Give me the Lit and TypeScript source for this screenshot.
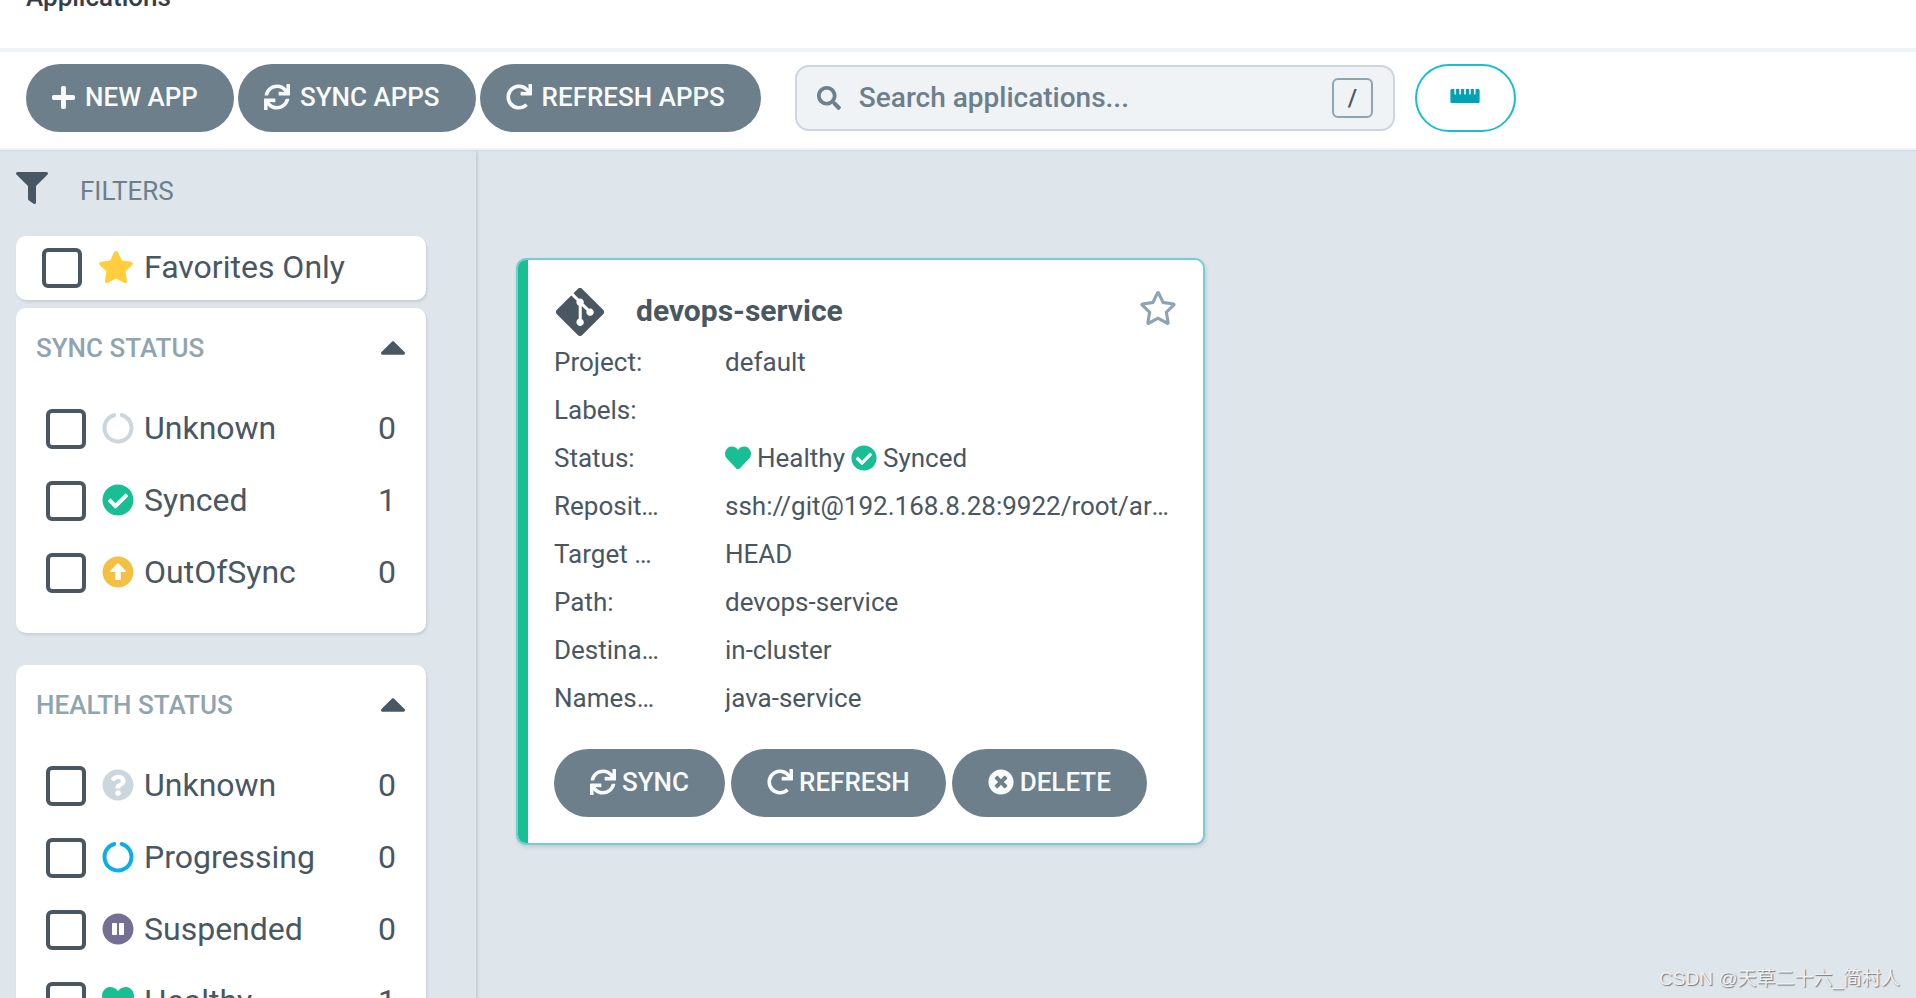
import { LitElement, html, css, svg, nothing } from "lit";
import { customElement, property, state } from "lit/decorators.js";

type Icon = { box: string; d: string };

const ICONS: Record<string, Icon> = {
  plus: {
    box: "0 32 448 448",
    d: "M416 208H272V64c0-17.67-14.33-32-32-32h-32c-17.67 0-32 14.33-32 32v144H32c-17.67 0-32 14.33-32 32v32c0 17.67 14.33 32 32 32h144v144c0 17.67 14.33 32 32 32h32c17.67 0 32-14.33 32-32V304h144c17.67 0 32-14.33 32-32v-32c0-17.67-14.33-32-32-32z",
  },
  sync: {
    box: "0 0 512 512",
    d: "M440.65 12.57l4 82.77A247.16 247.16 0 0 0 255.83 8C134.73 8 33.91 94.92 12.29 209.82A12 12 0 0 0 24.09 224h49.05a12 12 0 0 0 11.67-9.26 175.91 175.91 0 0 1 317-56.94l-101.46-4.86a12 12 0 0 0-12.57 12v47.41a12 12 0 0 0 12 12H500a12 12 0 0 0 12-12V12a12 12 0 0 0-12-12h-47.37a12 12 0 0 0-11.98 12.57zM255.83 432a175.61 175.61 0 0 1-146-77.8l101.8 4.87a12 12 0 0 0 12.57-12v-47.4a12 12 0 0 0-12-12H12a12 12 0 0 0-12 12V500a12 12 0 0 0 12 12h47.35a12 12 0 0 0 12-12.6l-4.15-82.57A247.17 247.17 0 0 0 255.83 504c121.11 0 221.93-86.92 243.55-201.82a12 12 0 0 0-11.8-14.18h-49.05a12 12 0 0 0-11.67 9.26A175.86 175.86 0 0 1 255.83 432z",
  },
  redo: {
    box: "0 0 512 512",
    d: "M500.33 0h-47.41a12 12 0 0 0-12 12.57l4 82.76A247.42 247.42 0 0 0 256 8C119.34 8 7.9 119.53 8 256.19 8.1 393.07 119.1 504 256 504a247.1 247.1 0 0 0 166.18-63.91 12 12 0 0 0 .48-17.43l-34-34a12 12 0 0 0-16.38-.55A176 176 0 1 1 402.1 157.8l-101.53-4.87a12 12 0 0 0-12.57 12v47.41a12 12 0 0 0 12 12h200.33a12 12 0 0 0 12-12V12a12 12 0 0 0-12-12z",
  },
  search: {
    box: "0 0 512 512",
    d: "M505 442.7L405.3 343c-4.5-4.5-10.6-7-17-7H372c27.6-35.3 44-79.7 44-128C416 93.1 322.9 0 208 0S0 93.1 0 208s93.1 208 208 208c48.3 0 92.7-16.4 128-44v16.3c0 6.4 2.5 12.5 7 17l99.7 99.7c9.4 9.4 24.6 9.4 33.9 0l28.3-28.3c9.4-9.4 9.4-24.6.1-34zM208 336c-70.7 0-128-57.2-128-128 0-70.7 57.2-128 128-128 70.7 0 128 57.2 128 128 0 70.7-57.2 128-128 128z",
  },
  ruler: {
    box: "0 118 576 276",
    d: "M544 118h-48v98a8 8 0 0 1-8 8h-16a8 8 0 0 1-8-8v-98h-64v98a8 8 0 0 1-8 8h-16a8 8 0 0 1-8-8v-98h-64v98a8 8 0 0 1-8 8h-16a8 8 0 0 1-8-8v-98h-64v98a8 8 0 0 1-8 8h-16a8 8 0 0 1-8-8v-98h-64v98a8 8 0 0 1-8 8H88a8 8 0 0 1-8-8v-98H32c-18 0-32 14-32 32v212c0 18 14 32 32 32h512c18 0 32-14 32-32V150c0-18-14-32-32-32z",
  },
  filter: {
    box: "0 0 512 512",
    d: "M487.976 0H24.028C2.71 0-8.047 25.866 7.058 40.971L192 225.941V432c0 7.831 3.821 15.17 10.237 19.662l80 55.98C298.02 518.69 320 507.493 320 487.98V225.941l184.947-184.97C520.021 25.896 509.338 0 487.976 0z",
  },
  star: {
    box: "0 0 576 512",
    d: "M259.3 17.8L194 150.2 47.9 171.5c-26.2 3.8-36.7 36.1-17.7 54.6l105.7 103-25 145.5c-4.5 26.3 23.2 46 46.4 33.7L288 439.6l130.7 68.7c23.2 12.2 50.9-7.4 46.4-33.7l-25-145.5 105.7-103c19-18.5 8.5-50.8-17.7-54.6L382 150.2 316.7 17.8c-11.7-23.6-45.6-23.9-57.4 0z",
  },
  starOutline: {
    box: "0 0 576 512",
    d: "M528.1 171.5L382 150.2 316.7 17.8c-11.7-23.6-45.6-23.9-57.4 0L194 150.2 47.9 171.5c-26.2 3.8-36.7 36.1-17.7 54.6l105.7 103-25 145.5c-4.5 26.3 23.2 46 46.4 33.7L288 439.6l130.7 68.7c23.2 12.2 50.9-7.4 46.4-33.7l-25-145.5 105.7-103c19-18.5 8.5-50.8-17.7-54.6zM388.6 312.3l23.7 138.4L288 385.4l-124.3 65.3 23.7-138.4-100.6-98 139-20.2 62.2-126 62.2 126 139 20.2-100.6 98z",
  },
  caret: {
    box: "11 183 298 169",
    d: "M288.662 352H31.338c-17.818 0-26.741-21.543-14.142-34.142l128.662-128.662c7.81-7.81 20.474-7.81 28.284 0l128.662 128.662c12.6 12.599 3.676 34.142-14.142 34.142z",
  },
  notch: {
    box: "0 0 512 512",
    d: "M288 39.056v16.659c0 10.804 7.281 20.159 17.686 23.066C383.204 100.434 440 171.518 440 256c0 101.689-82.295 184-184 184-101.689 0-184-82.295-184-184 0-84.47 56.786-155.564 134.312-177.219C216.719 75.874 224 66.517 224 55.712V39.064c0-15.709-14.834-27.153-30.046-23.234C86.603 43.482 7.394 141.206 8.003 257.332c.72 137.052 111.477 246.956 248.531 246.667C393.255 503.711 504 392.788 504 256c0-115.633-79.14-212.779-186.211-240.236C302.678 11.889 288 23.456 288 39.056z",
  },
  check: {
    box: "0 0 512 512",
    d: "M504 256c0 136.967-111.033 248-248 248S8 392.967 8 256 119.033 8 256 8s248 111.033 248 248zM227.314 387.314l184-184c6.248-6.248 6.248-16.379 0-22.627l-22.627-22.627c-6.248-6.249-16.379-6.249-22.628 0L216 308.118l-70.059-70.059c-6.248-6.248-16.379-6.248-22.628 0l-22.627 22.627c-6.248 6.248-6.248 16.379 0 22.627l104 104c6.249 6.249 16.379 6.249 22.628.001z",
  },
  arrowUp: {
    box: "0 0 512 512",
    d: "M8 256C8 119 119 8 256 8s248 111 248 248-111 248-248 248S8 393 8 256zm292 116V256h70.9c10.7 0 16.1-13 8.5-20.5L264.5 121.2c-4.7-4.7-12.2-4.7-16.9 0l-115 114.3c-7.6 7.6-2.2 20.5 8.5 20.5H212v116c0 6.6 5.4 12 12 12h64c6.6 0 12-5.4 12-12z",
  },
  question: {
    box: "0 0 512 512",
    d: "M504 256c0 136.997-111.043 248-248 248S8 392.997 8 256C8 119.083 119.043 8 256 8s248 111.083 248 248zM262.655 90c-54.497 0-89.255 22.957-116.549 63.758-3.536 5.286-2.353 12.415 2.715 16.258l34.699 26.31c5.205 3.947 12.621 3.008 16.665-2.122 17.864-22.658 30.113-35.797 57.303-35.797 20.429 0 45.698 13.148 45.698 32.958 0 14.976-12.363 22.667-32.534 33.976C247.128 238.528 216 254.941 216 296v4c0 6.627 5.373 12 12 12h56c6.627 0 12-5.373 12-12v-1.333c0-28.462 83.186-29.647 83.186-106.667 0-58.002-60.165-102-116.531-102zM256 338c-25.365 0-46 20.635-46 46 0 25.364 20.635 46 46 46s46-20.636 46-46c0-25.365-20.635-46-46-46z",
  },
  pause: {
    box: "0 0 512 512",
    d: "M256 8C119 8 8 119 8 256s111 248 248 248 248-111 248-248S393 8 256 8zm-16 328c0 8.8-7.2 16-16 16h-48c-8.8 0-16-7.2-16-16V176c0-8.8 7.2-16 16-16h48c8.8 0 16 7.2 16 16v160zm112 0c0 8.8-7.2 16-16 16h-48c-8.8 0-16-7.2-16-16V176c0-8.8 7.2-16 16-16h48c8.8 0 16 7.2 16 16v160z",
  },
  heart: {
    box: "0 0 512 512",
    d: "M462.3 62.6C407.5 15.9 326 24.3 275.7 76.2L256 96.5l-19.7-20.3C186.1 24.3 104.5 15.9 49.7 62.6c-62.8 53.6-66.1 149.8-9.9 207.9l193.5 199.8c12.5 12.9 32.8 12.9 45.3 0l193.5-199.8c56.3-58.1 53-154.3-9.8-207.9z",
  },
  times: {
    box: "0 0 512 512",
    d: "M256 8C119 8 8 119 8 256s111 248 248 248 248-111 248-248S393 8 256 8zm121.6 313.1c4.7 4.7 4.7 12.3 0 17L338 377.6c-4.7 4.7-12.3 4.7-17 0L256 312l-65.1 65.6c-4.7 4.7-12.3 4.7-17 0L134.4 338c-4.7-4.7-4.7-12.3 0-17l65.6-65-65.6-65.1c-4.7-4.7-4.7-12.3 0-17l39.6-39.6c4.7-4.7 12.3-4.7 17 0l65 65.7 65.1-65.6c4.7-4.7 12.3-4.7 17 0l39.6 39.6c4.7 4.7 4.7 12.3 0 17L312 256l65.6 65.1z",
  },
  git: {
    box: "0 32 448 448",
    d: "M439.55 236.05L244 40.45a28.87 28.87 0 0 0-40.81 0l-40.66 40.63 51.52 51.52c27.06-9.14 52.68 16.77 43.39 43.68l49.66 49.66c34.23-11.8 61.18 31 35.47 56.69-26.49 26.49-70.21-2.87-56-37.34L240.22 199v121.85c25.3 12.54 22.26 41.85 9.08 55a34.34 34.34 0 0 1-48.55 0c-17.57-17.6-11.07-46.91 11.25-56v-123c-20.8-8.51-24.6-30.74-18.64-45L142.57 101 8.45 235.14a28.86 28.86 0 0 0 0 40.81l195.61 195.6a28.86 28.86 0 0 0 40.8 0l194.69-194.69a28.86 28.86 0 0 0 0-40.81z",
  },
};

const icon = (name: string, cls = "") => html`<svg
  class="icon ${cls}"
  viewBox=${ICONS[name].box}
  aria-hidden="true"
>${svg`<path d=${ICONS[name].d}></path>`}</svg>`;

const shared = css`
  *,
  *::before,
  *::after {
    box-sizing: border-box;
  }
  .icon {
    display: block;
    flex: none;
    width: 26px;
    height: 26px;
    fill: currentColor;
  }
  button {
    font: inherit;
    cursor: pointer;
  }
  .pill {
    display: flex;
    align-items: center;
    height: 68px;
    border: 0;
    border-radius: 34px;
    background: #6d7f8b;
    color: #f8fbfb;
    font-size: 26px;
    font-weight: 500;
    line-height: 30px;
    white-space: nowrap;
  }
  .box {
    appearance: none;
    flex: none;
    width: 40px;
    height: 40px;
    margin: 2px 0 0;
    border: 4px solid #495763;
    border-radius: 6px;
    background: #fff;
  }
  .box:checked {
    background: #495763;
  }
  .grey {
    color: #ccd6dd;
  }
  .green {
    color: #18be94;
  }
  .amber {
    color: #f4c042;
  }
  .blue {
    color: #0dadea;
  }
  .purple {
    color: #766f94;
  }
  .gold {
    color: #ffce3c;
  }
`;

type Option = { label: string; icon: string; tone: string; count: number };

@customElement("filter-group")
class FilterGroup extends LitElement {
  @property() heading = "";
  @property({ attribute: false }) options: Option[] = [];
  @state() private open = true;

  static styles = [
    shared,
    css`
      :host {
        display: block;
        padding: 16px 20px 25px;
        border-radius: 10px;
        background: #fff;
        box-shadow: 1px 2px 3px rgba(0, 0, 0, 0.1);
      }
      .head {
        display: flex;
        align-items: center;
        justify-content: space-between;
        height: 48px;
        margin-bottom: 20px;
      }
      h2 {
        margin: 0;
        color: #8fa4b1;
        font-size: 26px;
        font-weight: 500;
        line-height: 48px;
      }
      .toggle {
        display: flex;
        padding: 0 1px 0 0;
        border: 0;
        background: none;
        color: #495763;
      }
      .toggle .icon {
        width: 24px;
        height: 14px;
      }
      .row {
        display: flex;
        align-items: center;
        height: 72px;
        padding: 0 10px;
        color: #495763;
        font-size: 32px;
        line-height: 40px;
      }
      .row .icon {
        width: 32px;
        height: 32px;
        margin: 0 10px 0 16px;
      }
      .name {
        flex: 1;
      }
    `,
  ];

  render() {
    return html`
      <div class="head">
        <h2>${this.heading}</h2>
        <button
          class="toggle"
          aria-label="Toggle ${this.heading}"
          aria-expanded=${this.open}
          @click=${() => (this.open = !this.open)}
        >
          ${icon("caret")}
        </button>
      </div>
      ${this.open
        ? this.options.map(
            (o) => html`<label class="row">
              <input class="box" type="checkbox" />
              ${icon(o.icon, o.tone)}
              <span class="name">${o.label}</span>
              <span>${o.count}</span>
            </label>`
          )
        : nothing}
    `;
  }
}

@customElement("app-card")
class AppCard extends LitElement {
  static styles = [
    shared,
    css`
      :host {
        display: block;
        overflow: hidden;
        border: 2px solid #76cbd4;
        border-radius: 10px;
        background: #fff;
        box-shadow: 1px 2px 4px rgba(0, 0, 0, 0.12);
        color: #495763;
      }
      .body {
        padding: 26px 26px;
        border-left: 10px solid #18be94;
      }
      .head {
        display: flex;
        align-items: center;
        height: 52px;
        padding-left: 2px;
      }
      .head .icon {
        width: 48px;
        height: 48px;
      }
      h3 {
        flex: 1;
        margin: 0 0 0 32px;
        padding-bottom: 2px;
        font-size: 30px;
        font-weight: 700;
        line-height: 36px;
      }
      .fav {
        align-self: flex-start;
        display: flex;
        padding: 4px 0 0;
        border: 0;
        background: none;
        color: #8fa4b1;
      }
      .fav .icon {
        width: 38px;
        height: 36px;
      }
      dl {
        margin: 0;
      }
      .row {
        display: grid;
        grid-template-columns: 106px 1fr;
        column-gap: 65px;
        height: 48px;
        font-size: 26px;
        line-height: 48px;
      }
      dt,
      dd {
        margin: 0;
        min-width: 0;
        overflow: hidden;
        text-overflow: ellipsis;
        white-space: nowrap;
      }
      .status {
        display: flex;
        align-items: center;
        gap: 6px;
      }
      .actions {
        display: flex;
        gap: 6px;
        margin-top: 27px;
      }
      .actions .pill {
        gap: 6px;
        padding: 0 36px 2px;
      }
    `,
  ];

  private row(label: string, value: unknown, cls = "") {
    return html`<div class="row">
      <dt>${label}</dt>
      <dd class=${cls}>${value}</dd>
    </div>`;
  }

  render() {
    return html`<div class="body">
      <div class="head">
        ${icon("git")}
        <h3>devops-service</h3>
        <button class="fav" aria-label="Add to favorites">${icon("starOutline")}</button>
      </div>
      <dl>
        ${this.row("Project:", "default")} ${this.row("Labels:", "")}
        ${this.row(
          "Status:",
          html`${icon("heart", "green")}<span>Healthy</span>${icon("check", "green")}<span>Synced</span>`,
          "status"
        )}
        ${this.row("Repository:", "ssh://git@192.168.8.28:9922/root/argocd.git")}
        ${this.row("Target Revision:", "HEAD")}
        ${this.row("Path:", "devops-service")}
        ${this.row("Destination:", "in-cluster")}
        ${this.row("Namespace:", "java-service")}
      </dl>
      <div class="actions">
        <button class="pill">${icon("sync")}SYNC</button>
        <button class="pill">${icon("redo")}REFRESH</button>
        <button class="pill">${icon("times")}DELETE</button>
      </div>
    </div>`;
  }
}

@customElement("app-root")
class AppRoot extends LitElement {
  private syncOptions: Option[] = [
    { label: "Unknown", icon: "notch", tone: "grey", count: 0 },
    { label: "Synced", icon: "check", tone: "green", count: 1 },
    { label: "OutOfSync", icon: "arrowUp", tone: "amber", count: 0 },
  ];

  private healthOptions: Option[] = [
    { label: "Unknown", icon: "question", tone: "grey", count: 0 },
    { label: "Progressing", icon: "notch", tone: "blue", count: 0 },
    { label: "Suspended", icon: "pause", tone: "purple", count: 0 },
    { label: "Healthy", icon: "heart", tone: "green", count: 1 },
  ];

  static styles = [
    shared,
    css`
      :host {
        position: relative;
        display: flex;
        flex-direction: column;
        height: 100vh;
        overflow: hidden;
        background: #dee5eb;
        color: #495763;
        font-family: Roboto, "Liberation Sans", sans-serif;
      }
      .top {
        display: flex;
        flex: none;
        align-items: flex-end;
        height: 52px;
        overflow: hidden;
        padding: 0 26px 36px;
        border-bottom: 4px solid #eff3f5;
        background: #fff;
      }
      h1 {
        margin: 0;
        color: #363c4a;
        font-size: 26px;
        font-weight: 500;
        line-height: 30px;
      }
      .tools {
        display: flex;
        flex: none;
        align-items: center;
        gap: 4px;
        padding: 12px 26px 16px;
        border-bottom: 2px solid #eff3f5;
        background: #fff;
        box-shadow: 0 1px 2px rgba(0, 0, 0, 0.06);
      }
      .tools .pill {
        gap: 10px;
        padding: 0 36px 2px 26px;
      }
      .tools .plus {
        width: 23px;
        height: 23px;
      }
      .search {
        display: flex;
        flex: 0 1 600px;
        align-items: center;
        min-width: 0;
        height: 66px;
        margin: 0 16px 0 30px;
        padding: 0 20px;
        border: 2px solid #ccd6dd;
        border-radius: 14px;
        background: #eff3f5;
        color: #6d7f8b;
      }
      .search .icon {
        width: 24px;
        height: 24px;
      }
      .search input {
        flex: 1;
        min-width: 0;
        margin: 0 18px;
        padding: 0;
        border: 0;
        outline: 0;
        background: none;
        color: inherit;
        font: 500 28px/36px Roboto, "Liberation Sans", sans-serif;
      }
      .search input::placeholder {
        color: #6d7f8b;
        opacity: 1;
      }
      kbd {
        width: 41px;
        height: 40px;
        border: 2px solid #8fa4b1;
        border-radius: 6px;
        color: #495763;
        font: 500 24px/36px Roboto, "Liberation Sans", sans-serif;
        text-align: center;
      }
      .tools .ruler {
        justify-content: center;
        width: 101px;
        padding: 0 0 4px;
        border: 2px solid #18bed4;
        background: #fff;
        color: #00a2b3;
      }
      .ruler .icon {
        width: 30px;
        height: 14px;
      }
      .content {
        display: flex;
        flex: 1;
        min-height: 0;
      }
      aside {
        flex: none;
        width: 476px;
        padding: 16px 50px 0 16px;
        overflow: hidden;
        box-shadow: 1px 2px 3px rgba(0, 0, 0, 0.16);
        clip-path: inset(0 -8px 0 0);
      }
      .title {
        display: flex;
        align-items: center;
        gap: 32px;
        height: 70px;
        padding-bottom: 26px;
        color: #495763;
        font-size: 26px;
        line-height: 30px;
      }
      .title .icon {
        width: 32px;
        height: 32px;
      }
      .title span {
        padding-top: 6px;
        color: #6d7f8b;
      }
      .fav {
        display: flex;
        align-items: center;
        height: 64px;
        margin-bottom: 8px;
        padding: 0 26px 2px;
        border-radius: 10px;
        background: #fff;
        box-shadow: 1px 2px 3px rgba(0, 0, 0, 0.1);
        font-size: 32px;
        line-height: 40px;
      }
      .fav .icon {
        width: 36px;
        height: 32px;
        margin: 0 10px 0 16px;
      }
      filter-group {
        margin-bottom: 32px;
      }
      main {
        display: flex;
        flex: 1;
        align-items: flex-start;
        min-width: 0;
        padding: 108px 40px 0;
      }
      app-card {
        flex: 0 1 689px;
        min-width: 0;
      }
      .mark {
        position: absolute;
        right: 16px;
        bottom: 5px;
        color: #eef1f4;
        font: 19px/28px "Liberation Sans", "Noto Sans CJK SC", sans-serif;
        text-shadow: 1px 1px 1px #777;
      }
    `,
  ];

  render() {
    return html`
      <header class="top"><h1>Applications</h1></header>
      <div class="tools">
        <button class="pill">${icon("plus", "plus")}NEW APP</button>
        <button class="pill">${icon("sync")}SYNC APPS</button>
        <button class="pill">${icon("redo")}REFRESH APPS</button>
        <label class="search">
          ${icon("search")}
          <input type="text" placeholder="Search applications..." aria-label="Search applications" />
          <kbd>/</kbd>
        </label>
        <button class="pill ruler" aria-label="Compact view">${icon("ruler")}</button>
      </div>
      <div class="content">
        <aside>
          <div class="title">${icon("filter")}<span>FILTERS</span></div>
          <label class="fav">
            <input class="box" type="checkbox" />
            ${icon("star", "gold")}
            <span>Favorites Only</span>
          </label>
          <filter-group heading="SYNC STATUS" .options=${this.syncOptions}></filter-group>
          <filter-group heading="HEALTH STATUS" .options=${this.healthOptions}></filter-group>
        </aside>
        <main><app-card></app-card></main>
      </div>
      <div class="mark">CSDN @天草二十六_简村人</div>
    `;
  }
}
